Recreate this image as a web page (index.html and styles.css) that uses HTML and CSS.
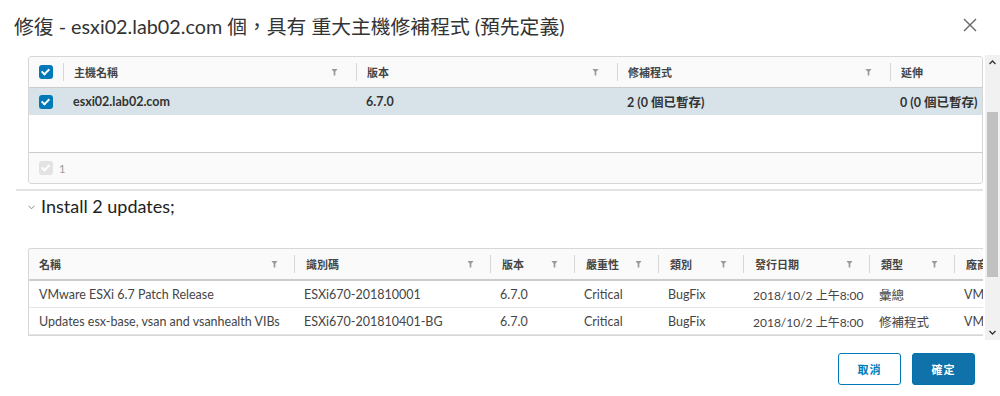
FILE: index.html
```html
<!DOCTYPE html>
<html lang="zh-Hant">
<head>
    <meta charset="UTF-8">
    <title>修復 - esxi02.lab02.com</title>
    <link rel="stylesheet" href="styles.css">
</head>
<body>
    <div class="modal">
        <header class="modal-header">
            <h1 class="modal-title">修復 - esxi02.lab02.com 個，具有 重大主機修補程式 (預先定義)</h1>
            <button class="close" type="button" aria-label="關閉">
                <svg width="14" height="14" viewBox="0 0 14 14"><path d="M1 1 L13 13 M13 1 L1 13" stroke="#666" stroke-width="1.4" fill="none"/></svg>
            </button>
        </header>

        <div class="modal-body">
            <div class="scroll-content">
                <div class="grid hosts">
                    <div class="grid-row grid-head">
                        <div class="cell cell-check"><span class="checkbox"></span></div>
                        <div class="cell"><span class="sep"></span><span class="label">主機名稱</span><span class="filter"></span></div>
                        <div class="cell"><span class="sep"></span><span class="label">版本</span><span class="filter"></span></div>
                        <div class="cell"><span class="sep"></span><span class="label">修補程式</span><span class="filter"></span></div>
                        <div class="cell"><span class="sep"></span><span class="label">延伸</span></div>
                    </div>
                    <div class="grid-row grid-body selected">
                        <div class="cell cell-check"><span class="checkbox"></span></div>
                        <div class="cell">esxi02.lab02.com</div>
                        <div class="cell">6.7.0</div>
                        <div class="cell">2 (0 個已暫存)</div>
                        <div class="cell">0 (0 個已暫存)</div>
                    </div>
                    <div class="grid-empty"></div>
                    <div class="grid-foot">
                        <span class="checkbox disabled"></span>
                        <span class="count">1</span>
                    </div>
                </div>

                <div class="section">
                    <div class="section-title">
                        <svg class="chevron" width="7" height="5" viewBox="0 0 7 5"><path d="M0.5 0.8 L3.5 3.8 L6.5 0.8" stroke="#888" stroke-width="1" fill="none"/></svg>
                        <span>Install 2 updates;</span>
                    </div>

                    <div class="grid updates">
                        <div class="grid-row grid-head">
                            <div class="cell"><span class="label">名稱</span><span class="filter"></span></div>
                            <div class="cell"><span class="sep"></span><span class="label">識別碼</span><span class="filter"></span></div>
                            <div class="cell"><span class="sep"></span><span class="label">版本</span><span class="filter"></span></div>
                            <div class="cell"><span class="sep"></span><span class="label">嚴重性</span><span class="filter"></span></div>
                            <div class="cell"><span class="sep"></span><span class="label">類別</span><span class="filter"></span></div>
                            <div class="cell"><span class="sep"></span><span class="label">發行日期</span><span class="filter"></span></div>
                            <div class="cell"><span class="sep"></span><span class="label">類型</span><span class="filter"></span></div>
                            <div class="cell"><span class="sep"></span><span class="label">廠商</span><span class="filter"></span></div>
                        </div>
                        <div class="grid-row grid-body">
                            <div class="cell">VMware ESXi 6.7 Patch Release</div>
                            <div class="cell">ESXi670-201810001</div>
                            <div class="cell">6.7.0</div>
                            <div class="cell">Critical</div>
                            <div class="cell">BugFix</div>
                            <div class="cell cell-date">2018/10/2 上午8:00</div>
                            <div class="cell">彙總</div>
                            <div class="cell">VMware</div>
                        </div>
                        <div class="grid-row grid-body">
                            <div class="cell">Updates esx-base, vsan and vsanhealth VIBs</div>
                            <div class="cell">ESXi670-201810401-BG</div>
                            <div class="cell">6.7.0</div>
                            <div class="cell">Critical</div>
                            <div class="cell">BugFix</div>
                            <div class="cell cell-date">2018/10/2 上午8:00</div>
                            <div class="cell">修補程式</div>
                            <div class="cell">VMware</div>
                        </div>
                    </div>
                </div>
            </div>

            <div class="scrollbar">
                <span class="arrow">
                    <svg width="7" height="5" viewBox="0 0 7 5"><path d="M0.5 4 L3.5 1 L6.5 4" stroke="#333" stroke-width="1.3" fill="none"/></svg>
                </span>
                <div class="track"><div class="thumb"></div></div>
                <span class="arrow">
                    <svg width="7" height="5" viewBox="0 0 7 5"><path d="M0.5 1 L3.5 4 L6.5 1" stroke="#333" stroke-width="1.3" fill="none"/></svg>
                </span>
            </div>
        </div>

        <footer class="modal-footer">
            <button class="btn btn-outline" type="button">取消</button>
            <button class="btn btn-primary" type="button">確定</button>
        </footer>
    </div>
</body>
</html>
```

FILE: styles.css
```css
body {
    margin: 0;
    background-color: #fff;
    font-family: Lato, "Noto Sans CJK TC", sans-serif;
    color: #333;
}

.modal {
    width: 1000px;
    height: 396px;
    overflow: hidden;
}

.modal-header {
    display: flex;
    align-items: center;
    justify-content: space-between;
    height: 55px;
    padding: 0 23px 0 14px;
    box-sizing: border-box;
}

.modal-title {
    margin: 0 0 5px;
    font-size: 19.8px;
    font-weight: 400;
    color: #333;
}

.close {
    border: none;
    background: none;
    padding: 0;
    margin-bottom: 5px;
    width: 14px;
    height: 14px;
    cursor: pointer;
}

.close svg {
    display: block;
}

.modal-body {
    display: flex;
    height: 285px;
}

.scroll-content {
    width: 967px;
    padding-left: 16px;
    padding-right: 2px;
    overflow: hidden;
}

/* data grids */
.grid {
    margin-left: 12px;
    border: 1px solid #d7d7d7;
    border-radius: 3px;
    overflow: hidden;
    font-size: 12.5px;
}

.grid-row {
    display: grid;
}

.hosts {
    margin-top: 1px;
}

.hosts .grid-row {
    grid-template-columns: 34px 293px 261px 273px 1fr;
}

.updates {
    border-right: none;
    border-radius: 3px 0 0 0;
}

.updates .grid-row {
    grid-template-columns: 265px 196px 84px 84px 85px 126px 85px 120px;
    width: 1045px;
}

.cell {
    display: flex;
    align-items: center;
    padding-left: 10px;
    white-space: nowrap;
    overflow: hidden;
}

.cell-date {
    font-size: 12px;
}

.grid-head {
    height: 30px;
    background-color: #fafafa;
    border-bottom: 1px solid #ccc;
    font-size: 11px;
    font-weight: 700;
    color: #454545;
}

.updates .grid-head {
    height: 30px;
    border-bottom: 2px solid #ccc;
}

.grid-head .cell {
    padding-left: 0;
}

.grid-head .cell:first-child,
.grid-head .cell-check {
    padding-left: 10px;
}

.sep {
    width: 1px;
    height: 18px;
    background-color: #d7d7d7;
    margin-right: 10px;
    flex: none;
}

.updates .sep {
    margin-right: 11px;
}

.label {
    flex: 1;
}

.filter {
    width: 7px;
    height: 7px;
    margin-right: 18px;
    background-color: #9a9a9a;
    clip-path: polygon(0 0, 100% 0, 62% 45%, 62% 100%, 38% 100%, 38% 45%);
    flex: none;
}

.updates .filter {
    margin-right: 16px;
}

.grid-body {
    height: 26px;
    border-bottom: 1px solid #e4e4e4;
    color: #454545;
}

.hosts .grid-body {
    height: 27px;
    border-bottom: none;
    font-weight: 700;
    color: #333;
}

.selected {
    background-color: #d8e3e9;
}

.grid-empty {
    height: 37px;
}

.grid-foot {
    display: flex;
    align-items: center;
    gap: 6px;
    height: 30px;
    padding-left: 10px;
    border-top: 1px solid #ccc;
    background-color: #fafafa;
    font-size: 11px;
    color: #999;
}

.checkbox {
    position: relative;
    width: 14px;
    height: 14px;
    border-radius: 3px;
    background-color: #0079b8;
    flex: none;
}

.checkbox::after {
    content: "";
    position: absolute;
    left: 4px;
    top: 2px;
    width: 3px;
    height: 6px;
    border: solid #fff;
    border-width: 0 2px 2px 0;
    transform: rotate(45deg);
}

.checkbox.disabled {
    background-color: #e3e3e3;
}

/* updates section */
.section {
    margin-top: 5px;
    border-top: 2px solid #e3e3e3;
}

.section-title {
    display: flex;
    align-items: center;
    height: 26px;
    margin-top: 2px;
    margin-bottom: 29px;
    padding-left: 12px;
    font-size: 18px;
    color: #222;
}

.chevron {
    margin-right: 6px;
    margin-top: 2px;
}

/* fake scrollbar */
.scrollbar {
    display: flex;
    flex-direction: column;
    width: 15px;
    background-color: #f1f1f1;
}

.arrow {
    display: flex;
    align-items: center;
    justify-content: center;
    height: 15px;
}

.track {
    flex: 1;
    padding: 42px 2px 48px;
}

.thumb {
    height: 100%;
    background-color: #c1c1c1;
}

/* footer */
.modal-footer {
    display: flex;
    justify-content: flex-end;
    gap: 11px;
    padding: 13px 25px 0 0;
}

.btn {
    width: 63px;
    height: 32px;
    border-radius: 3px;
    font-family: "Noto Sans CJK TC", sans-serif;
    font-size: 11px;
    font-weight: 700;
    letter-spacing: 1px;
    cursor: pointer;
}

.btn-outline {
    border: 1px solid #0079b8;
    background-color: #fff;
    color: #0079b8;
}

.btn-primary {
    border: 1px solid #0072ab;
    background-color: #0f72aa;
    color: #fff;
}
```
